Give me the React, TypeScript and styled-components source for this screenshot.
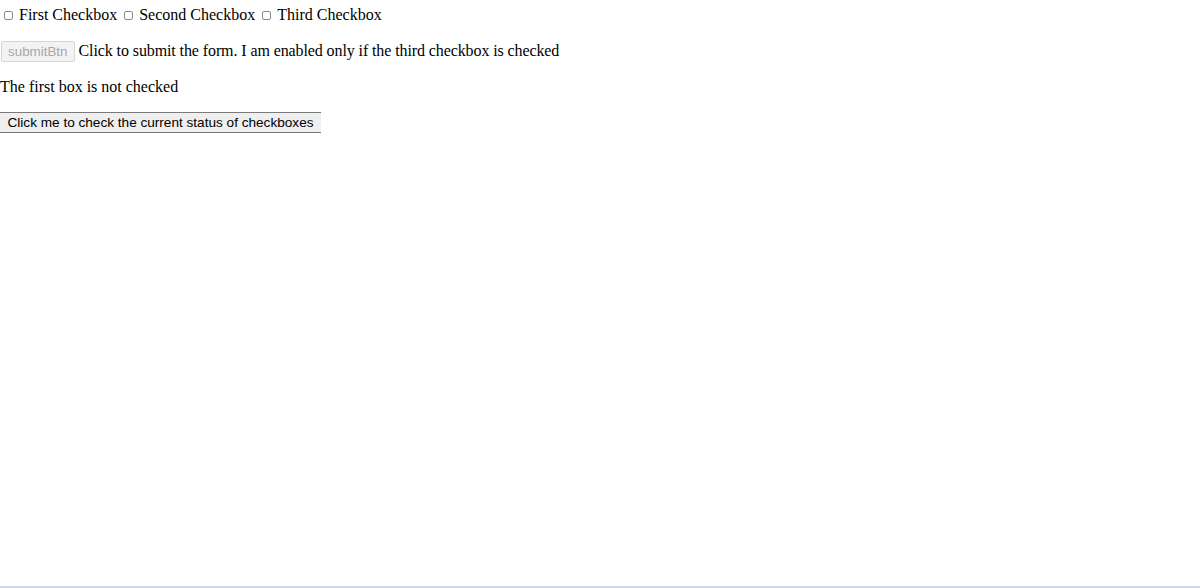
import React, { useState } from 'react';
import styled, { createGlobalStyle } from 'styled-components';

const GlobalStyle = createGlobalStyle`
  html, body {
    margin: 0;
    padding: 0;
    background: #ffffff;
  }
  body {
    font-family: "Liberation Serif", "Times New Roman", serif;
    font-size: 16px;
    color: #000000;
  }
`;

const Page = styled.div`
  display: flex;
  flex-direction: column;
  align-items: flex-start;
  padding-top: 6px;
  min-height: 100vh;
  box-sizing: border-box;
  border-bottom: 2px solid #d3d9e4;
`;

const Row = styled.div`
  display: flex;
  align-items: center;
  height: 18px;
  margin-bottom: 18px;
  white-space: nowrap;
`;

const Check = styled.input.attrs({ type: 'checkbox' })`
  appearance: none;
  width: 9px;
  height: 9px;
  margin: 0 6px 0 4px;
  border: 1px solid #8a8a8a;
  border-radius: 2px;
  background: #ffffff;
  box-sizing: border-box;
  &:checked {
    background: #0075ff;
    border-color: #0075ff;
  }
`;

const Label = styled.span`
  margin-right: 3px;
`;

const SubmitText = styled.span`
  letter-spacing: -0.1px;
`;

const SubmitButton = styled.button`
  font-family: "Liberation Sans", Arial, sans-serif;
  font-size: 13.4px;
  height: 21px;
  padding: 0 6px;
  margin: 0 4px 0 1px;
  border: 1px solid #d6d6d6;
  border-radius: 2px;
  background: #f3f3f3;
  color: #a8a8a8;
`;

const Status = styled.p`
  margin: 0 0 16px 0;
  height: 18px;
  line-height: 18px;
`;

const StatusButton = styled.button`
  font-family: "Liberation Sans", Arial, sans-serif;
  font-size: 13.6px;
  color: #000000;
  height: 21px;
  width: 321px;
  padding: 0;
  margin: 0;
  border: none;
  border-top: 1px solid #7a7a7a;
  border-bottom: 1px solid #7a7a7a;
  background: #efefef;
`;

export default function App() {
  const [checks, setChecks] = useState([false, false, false]);
  const [status, setStatus] = useState('The first box is not checked');
  const toggle = (i: number) =>
    setChecks((c) => c.map((v, j) => (j === i ? !v : v)));

  return (
    <>
      <GlobalStyle />
      <Page>
        <Row>
          <Check checked={checks[0]} onChange={() => toggle(0)} />
          <Label>First Checkbox</Label>
          <Check checked={checks[1]} onChange={() => toggle(1)} />
          <Label>Second Checkbox</Label>
          <Check checked={checks[2]} onChange={() => toggle(2)} />
          <Label>Third Checkbox</Label>
        </Row>
        <Row>
          <SubmitButton disabled={!checks[2]}>submitBtn</SubmitButton>
          <SubmitText>Click to submit the form. I am enabled only if the third checkbox is checked</SubmitText>
        </Row>
        <Status>{status}</Status>
        <StatusButton
          onClick={() =>
            setStatus(checks[0] ? 'The first box is checked' : 'The first box is not checked')
          }
        >
          Click me to check the current status of checkboxes
        </StatusButton>
      </Page>
    </>
  );
}
